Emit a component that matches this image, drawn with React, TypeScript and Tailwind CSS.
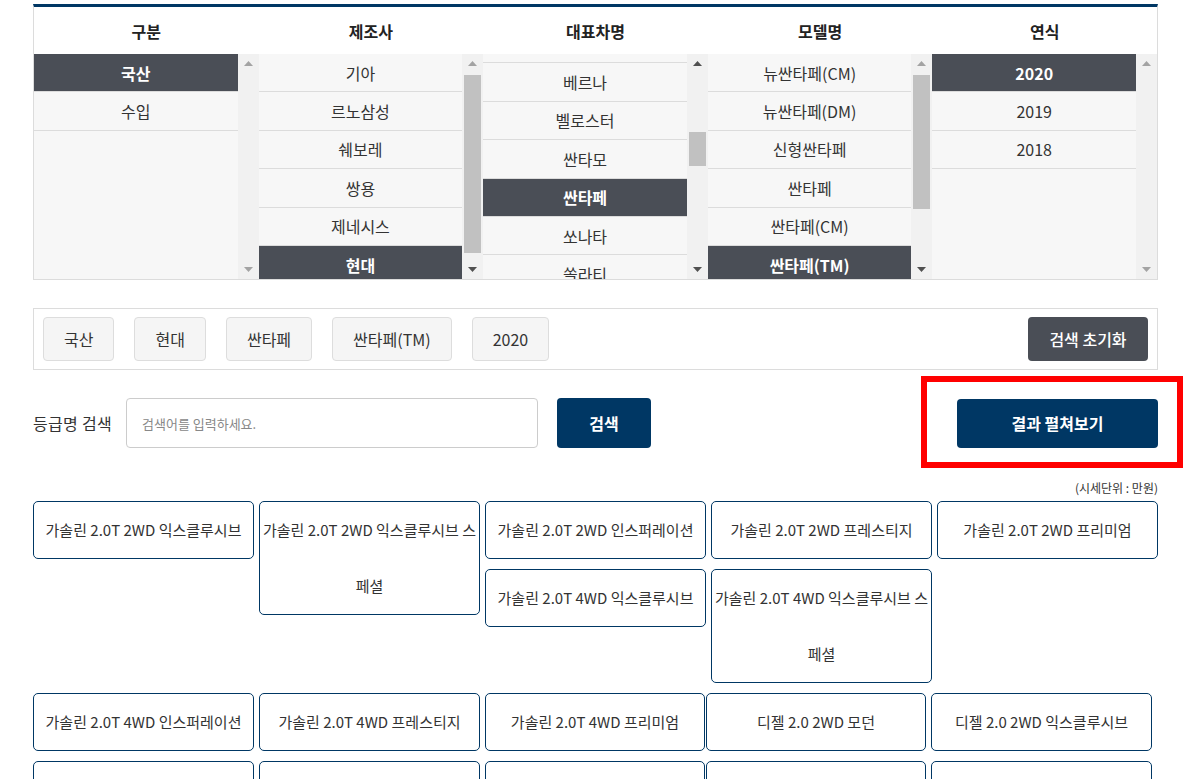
import React from 'react'

type Col = {
  title: string
  items: string[]
  selected: string
  offset?: boolean
  thumb?: 'long' | 'short' | 'mid' | null
  upOn: boolean
  downOn: boolean
}

const COLS: Col[] = [
  { title: '구분', items: ['국산', '수입'], selected: '국산', thumb: null, upOn: false, downOn: false },
  {
    title: '제조사',
    items: ['기아', '르노삼성', '쉐보레', '쌍용', '제네시스', '현대', '기타'],
    selected: '현대',
    thumb: 'long',
    upOn: false,
    downOn: true,
  },
  {
    title: '대표차명',
    items: ['베라크루즈', '베르나', '벨로스터', '싼타모', '싼타페', '쏘나타', '쏠라티', '아반떼'],
    selected: '싼타페',
    offset: true,
    thumb: 'short',
    upOn: true,
    downOn: true,
  },
  {
    title: '모델명',
    items: ['뉴싼타페(CM)', '뉴싼타페(DM)', '신형싼타페', '싼타페', '싼타페(CM)', '싼타페(TM)', '싼타페(DM)'],
    selected: '싼타페(TM)',
    thumb: 'mid',
    upOn: false,
    downOn: true,
  },
  { title: '연식', items: ['2020', '2019', '2018'], selected: '2020', thumb: null, upOn: false, downOn: false },
]

const Arrow = ({ up, on }: { up: boolean; on: boolean }) => (
  <svg width="9" height="5" viewBox="0 0 9 5" className="block">
    <polygon points={up ? '0,5 4.5,0 9,5' : '0,0 9,0 4.5,5'} fill={on ? '#505050' : '#a3a3a3'} />
  </svg>
)

const ScrollBar = ({ col }: { col: Col }) => (
  <div className="flex w-[21px] shrink-0 flex-col bg-[#f1f1f1]">
    <div className="flex h-[17px] items-center justify-center pt-[2px]">
      <Arrow up on={col.upOn} />
    </div>
    <div className="flex-1 px-[2px]">
      {col.thumb === 'long' && <div className="mt-[4px] h-[178px] bg-[#c1c1c1]" />}
      {col.thumb === 'mid' && <div className="mt-[4px] h-[134px] bg-[#c1c1c1]" />}
      {col.thumb === 'short' && <div className="mt-[61px] h-[34px] bg-[#c1c1c1]" />}
    </div>
    <div className="flex h-[17px] items-center justify-center pb-[2px]">
      <Arrow up={false} on={col.downOn} />
    </div>
  </div>
)

const ListColumn = ({ col }: { col: Col }) => (
  <div className="flex h-[225px]">
    <div className="flex-1 overflow-hidden bg-[#f7f7f7]">
      <div className={col.offset ? '-mt-[29px]' : ''}>
        {col.items.map((it) => {
          const sel = it === col.selected
          return (
            <div
              key={it}
              className={
                sel
                  ? 'flex h-[38.4px] items-center justify-center border-b border-[#dcdcdc] bg-[#4a4e56] text-[16px] font-bold text-white'
                  : 'flex h-[38.4px] items-center justify-center border-b border-[#dcdcdc] text-[16px] text-[#333]'
              }
            >
              {it}
            </div>
          )
        })}
      </div>
    </div>
    <ScrollBar col={col} />
  </div>
)

const CHIPS = ['국산', '현대', '싼타페', '싼타페(TM)', '2020']

const Card = ({ text, w = 'w-[221px]', tall = false }: { text: string; w?: string; tall?: boolean }) => (
  <div
    className={
      (tall ? 'h-[114px] ' : 'h-[58px] ') +
      w +
      ' shrink-0 rounded-[5px] border border-[#003764] text-center text-[15px] leading-[56px] text-[#333]'
    }
  >
    {text}
  </div>
)

const App = () => {
  return (
    <div className="min-h-screen bg-white pt-[4px] font-['Noto_Sans_CJK_KR','Noto_Sans',sans-serif]">
      <div className="ml-[33px] w-[1125px]">
        {/* 차량 선택 테이블 */}
        <div className="border-t-[3px] border-r border-b border-l border-t-[#003764] border-r-[#dcdcdc] border-b-[#dcdcdc] border-l-[#dcdcdc]">
          <div className="grid grid-cols-5">
            {COLS.map((c) => (
              <div key={c.title}>
                <div className="flex h-[47px] items-center justify-center bg-white text-[16px] font-bold text-[#222]">
                  {c.title}
                </div>
                <ListColumn col={c} />
              </div>
            ))}
          </div>
        </div>

        {/* 선택 조건 */}
        <div className="mt-[28px] flex h-[62px] items-center justify-between border border-[#dcdcdc] px-[9px]">
          <div className="flex gap-[20px]">
            {CHIPS.map((c) => (
              <div
                key={c}
                className="flex h-[44px] items-center rounded-[4px] border border-[#dddddd] bg-[#f5f5f5] px-[20px] text-[16px] text-[#333]"
              >
                {c}
              </div>
            ))}
          </div>
          <button className="h-[44px] w-[120px] rounded-[4px] bg-[#4a4e56] text-[16px] font-medium text-white">
            검색 초기화
          </button>
        </div>

        {/* 등급명 검색 */}
        <div className="mt-[28px] flex items-center">
          <span className="w-[93px] text-[16px] tracking-[0.3px] text-[#333]">등급명 검색</span>
          <input
            className="h-[50px] w-[412px] rounded-[4px] border border-[#cccccc] px-[15px] text-[13px] text-[#333] outline-none placeholder:text-[#888]"
            placeholder="검색어를 입력하세요."
          />
          <button className="ml-[19px] h-[50px] w-[94px] rounded-[4px] bg-[#003764] text-[16px] font-bold text-white">
            검색
          </button>
          <div className="relative ml-auto">
            <button className="h-[49px] w-[201px] rounded-[4px] bg-[#003764] text-[16px] font-bold text-white">
              결과 펼쳐보기
            </button>
            <div className="pointer-events-none absolute -top-[23px] -right-[25px] -bottom-[20px] -left-[36px] border-[6px] border-[#ff0000]" />
          </div>
        </div>

        <div className="mt-[32px] text-right text-[12px] leading-[16px] text-[#333]">(시세단위 : 만원)</div>

        {/* 등급 목록 */}
        <div className="mt-[5px] flex items-start gap-[5px]">
          <Card text="가솔린 2.0T 2WD 익스클루시브" />
          <Card text="가솔린 2.0T 2WD 익스클루시브 스페셜" tall />
          <div className="flex flex-col gap-[10px]">
            <Card text="가솔린 2.0T 2WD 인스퍼레이션" />
            <Card text="가솔린 2.0T 4WD 익스클루시브" />
          </div>
          <div className="flex flex-col gap-[10px]">
            <Card text="가솔린 2.0T 2WD 프레스티지" />
            <Card text="가솔린 2.0T 4WD 익스클루시브 스페셜" tall />
          </div>
          <Card text="가솔린 2.0T 2WD 프리미엄" />
        </div>

        {[
          ['가솔린 2.0T 4WD 인스퍼레이션', '가솔린 2.0T 4WD 프레스티지', '가솔린 2.0T 4WD 프리미엄', '디젤 2.0 2WD 모던', '디젤 2.0 2WD 익스클루시브'],
          ['디젤 2.0 2WD 프레스티지', '디젤 2.0 2WD 프리미엄', '디젤 2.0 4WD 모던', '디젤 2.0 4WD 익스클루시브', '디젤 2.0 4WD 프레스티지'],
        ].map((row, i) => (
          <div key={i} className="mt-[10px] flex">
            <Card text={row[0]} />
            <div className="ml-[5px]">
              <Card text={row[1]} />
            </div>
            <div className="ml-[5px]">
              <Card text={row[2]} w="w-[220px]" />
            </div>
            <div className="ml-px">
              <Card text={row[3]} w="w-[220px]" />
            </div>
            <div className="ml-[5px]">
              <Card text={row[4]} />
            </div>
          </div>
        ))}
      </div>
    </div>
  )
}

export default App
